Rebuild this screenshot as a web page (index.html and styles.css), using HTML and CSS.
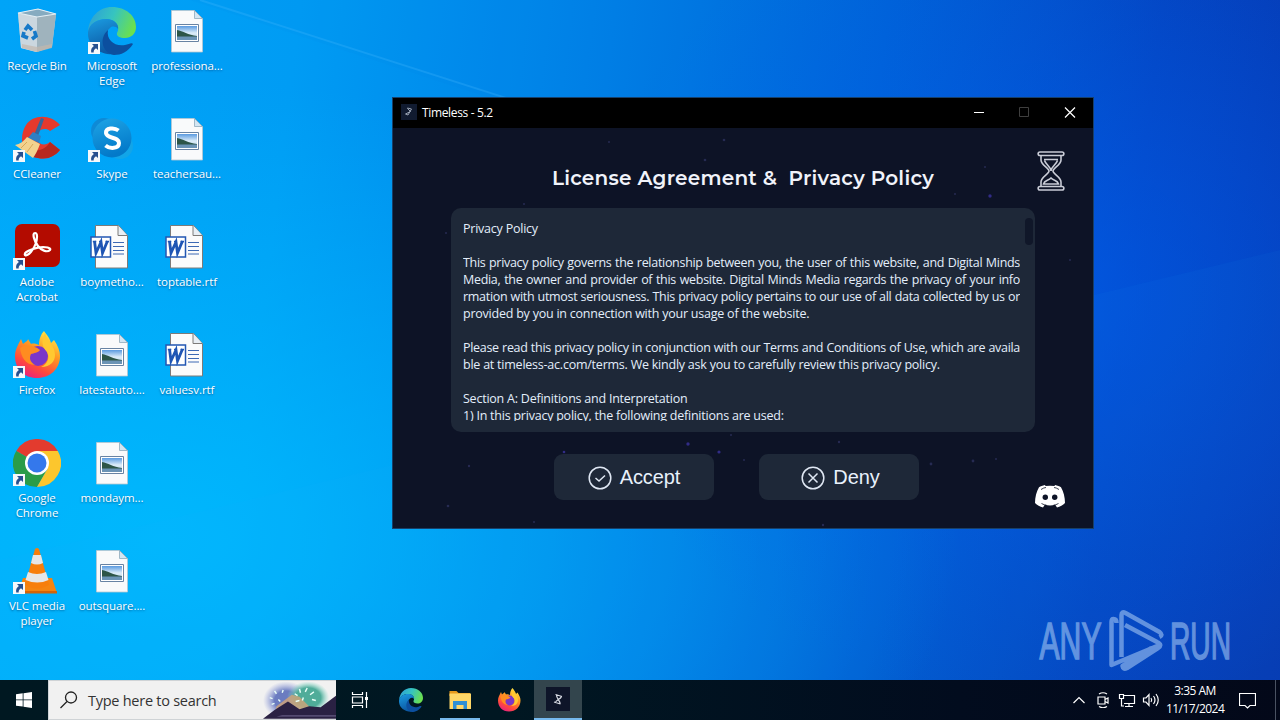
FILE: index.html
```html
<!DOCTYPE html>
<html lang="en">
<head>
    <meta charset="UTF-8">
    <meta name="viewport" content="width=device-width, initial-scale=1.0">
    <title>Timeless - 5.2</title>
    <link rel="stylesheet" href="styles.css">
</head>
<body>
    <!-- shared icons -->
    <svg class="defs" width="0" height="0">
        <defs>
            <linearGradient id="edgeBlue" x1="0" y1="0" x2="0.3" y2="1">
                <stop offset="0" stop-color="#1b9de2"/><stop offset="1" stop-color="#0c59a4"/>
            </linearGradient>
            <linearGradient id="edgeGreen" x1="0" y1="0.2" x2="1" y2="0.5">
                <stop offset="0" stop-color="#2c9fd8"/><stop offset="0.5" stop-color="#36c4c0"/><stop offset="1" stop-color="#6be04e"/>
            </linearGradient>
            <linearGradient id="skypeBlue" x1="0" y1="0" x2="0.3" y2="1">
                <stop offset="0" stop-color="#1ea5e6"/><stop offset="1" stop-color="#0379c9"/>
            </linearGradient>
            <linearGradient id="foxBody" x1="0.8" y1="0" x2="0.3" y2="1">
                <stop offset="0" stop-color="#fff14a"/><stop offset="0.4" stop-color="#ff9a22"/><stop offset="0.75" stop-color="#ff4a3c"/><stop offset="1" stop-color="#e9217f"/>
            </linearGradient>
            <linearGradient id="photoSky" x1="0" y1="0" x2="0" y2="1">
                <stop offset="0" stop-color="#5a9ae0"/><stop offset="0.5" stop-color="#dcecf8"/><stop offset="1" stop-color="#b5d3ea"/>
            </linearGradient>
            <symbol id="arrow" viewBox="0 0 12 12">
                <rect width="12" height="12" fill="#f5f8fb"/>
                <path d="M4 2h6v6L8 6.200C6 7.500 5.500 9 5.700 10.500H3.200C2.700 7.500 3.800 5.500 5.900 4.100z" fill="#27508f"/>
            </symbol>
            <symbol id="picture" viewBox="0 0 48 48">
                <path d="M8.500 3.500h23l8 8v33.500h-31z" fill="#f9fafb" stroke="#b9c6cf" stroke-width="0.800"/>
                <path d="M31.500 3.500l8 8h-8z" fill="#d3e6f3" stroke="#8fa9ba" stroke-width="0.800"/>
                <path d="M12.500 17.500h23v17h-23z" fill="#fff" stroke="#6883a3"/>
                <path d="M14 19h20v14h-20z" fill="url(#photoSky)"/>
                <path d="M14 23c6 1 11 5 20 6v1H14z" fill="#2d5547"/>
                <path d="M14 29.500h20V33H14z" fill="#6a93b5"/>
            </symbol>
            <symbol id="word" viewBox="0 0 48 48">
                <path d="M7.500 2.500h23l9 10v32.500h-32z" fill="#fbfbfb" stroke="#7d7a78"/>
                <path d="M30 2.500v10h9.500" fill="#e8eef4" stroke="#7d7a78"/>
                <path d="M25 19.500h11M25 23.500h11M25 27.500h11M25 31h11" stroke="#3d69b4"/>
                <path d="M3 14h19.500v20H3z" fill="#fff" stroke="#2357b3" stroke-width="1.500"/>
                <path d="M4.800 18.500h3.500M11 18.500h3M17.500 18.500h3.500" stroke="#1f55b4" stroke-width="1.500"/>
                <path d="M6.500 18l1.500 12 5-11 1.500 11 5-12" fill="none" stroke="#1f55b4" stroke-width="2.800"/>
            </symbol>
            <symbol id="edge" viewBox="0 0 48 48">
                <path d="M0 25C1 10 11 0 24 0c14 0 24 9 24 20 0 7-5 11-11 11-5 0-9-2-8-5 4-7-2-14-11-14C9 12 2 17 0 25z" fill="url(#edgeGreen)"/>
                <path d="M0 25c1-8 9-13 18-13 8 0 13 5 12 10-2-3-6-3-8-1-7 5-7 20 6 26C12 49-1 39 0 25z" fill="url(#edgeBlue)"/>
                <path d="M20 23c-2 10 7 17 17 15 4-1 7-3 8-1-5 8-12 11-19 11C15 46 10 32 20 23z" fill="#0c4f9f"/>
            </symbol>
            <symbol id="firefox" viewBox="0 0 48 48">
                <path d="M31 0c2 3 6 7 7 12l3-3c4 6 6 11 6 16 0 13-10 22-23 22S2 38 2 25C2 19 5 14 8 8l2 5c2-2 5-3 5-5l3 5c2-1 6 0 8 1 0-6 2-11 5-14z" fill="url(#foxBody)"/>
                <circle cx="25" cy="25" r="10" fill="#7a36c9"/>
                <path d="M7 17c5-4 14-3 20 2-2 3-6 3-9 4-2 4-1 8 4 11C12 34 8 25 7 17z" fill="#ff8c20"/>
                <path d="M32 2c-4 8-3 14 2 19 3 5 1 12-6 15 10 0 14-6 14-12 0-10-8-13-10-22z" fill="#ffc931"/>
            </symbol>
            <symbol id="glass" viewBox="0 0 28 40">
                <path d="M3 1h22c2.500 0 2.500 3.500 0 3.500H3C.5 4.500.5 1 3 1zM3 35.500h22c2.500 0 2.500 3.500 0 3.500H3C.5 39 .5 35.500 3 35.500z"/>
                <path d="M4 5v4c0 5 8 8 8 11s-8 6-8 11v4M24 5v4c0 5-8 8-8 11s8 6 8 11v4M7 8.500h14M7.500 9.500C9 14 14 16 14 20c0-4 5-6 6.500-10.500M6.500 33c1-4 5-3 7.500-6 2.500 3 6.500 2 7.500 6z"/>
            </symbol>
        </defs>
    </svg>

    <div class="screen">
        <svg class="beams" viewBox="0 0 1280 680" preserveAspectRatio="none">
            <path d="M190 0L680 160V0z" fill="#0070e0" opacity="0.060"/>
            <path d="M200 0L700 160" stroke="#4cbcff" stroke-width="2" opacity="0.250"/>
            <path d="M0 560L1280 250V680H0z" fill="#20a8ff" opacity="0.050"/>
        </svg>

        <div class="desktop">
            <div class="shortcut">
                <svg class="shortcut__icon" viewBox="0 0 48 48">
                    <path d="M5 6l20-4 18 5-4 33-16 5-15-4z" fill="#b8cfdb"/>
                    <path d="M5 6l19 4v35L8 41z" fill="#ced8df" opacity="0.850"/>
                    <path d="M24 10l19-3-4 33-15 5z" fill="#9fb3bd"/>
                    <path d="M5 6l20-4 18 5-19 3z" fill="#86abc0" stroke="#e4eff5" stroke-width="1.200"/>
                    <path d="M9 37l15 3 15-3v4l-15 4-15-4z" fill="#c3b8ac" opacity="0.700"/>
                    <path d="M12 23l3-4 4 4M21.500 24l1.500 5-4 3M15 31l-5-2 1-4" fill="none" stroke="#1679c8" stroke-width="3.600"/>
                </svg>
                <span>Recycle Bin</span>
            </div>
            <div class="shortcut">
                <svg class="shortcut__icon" viewBox="0 0 48 48">
                    <path d="M47 10C38-1 20-1 13 10 5 23 9 41 25 43c10 2 17-2 22-8l-10-8c-4 4-11 3-13-2-2-9 7-14 13-9z" fill="#e5392d"/>
                    <path d="M47 35c-5 6-12 10-22 8-7-1-11-5-13-10 13 6 22 0 25-6z" fill="#b7281f"/>
                    <path d="M28 3l3 1-6 17-4-1z" fill="#35669c"/>
                    <path d="M20 17l8 4-2 7-11-5z" fill="#2f7fc4"/>
                    <path d="M14 22l13 7c-2 6-5 11-7 14L2 30c5-1 9-4 12-8z" fill="#f3d28e"/>
                    <path d="M14 27L8 33M20 29l-6 8" stroke="#d9a859"/>
                    <use href="#arrow" y="35" width="12" height="12"/>
                </svg>
                <span>CCleaner</span>
            </div>
            <div class="shortcut">
                <svg class="shortcut__icon" viewBox="0 0 48 48">
                    <rect x="2" y="1" width="45" height="43" rx="7" fill="#b30b00"/>
                    <path d="M12 32c3 2 9-6 11-12 1-4 2-10-1-10s-1 8 3 13c3 4 9 7 12 4 2-3-9-4-17-1-6 2-9 4-8 6z" fill="none" stroke="#fff" stroke-width="2.200"/>
                    <use href="#arrow" y="35" width="12" height="12"/>
                </svg>
                <span>Adobe<br>Acrobat</span>
            </div>
            <div class="shortcut">
                <svg class="shortcut__icon" viewBox="0 0 48 48">
                    <use href="#firefox" width="48" height="48"/>
                    <use href="#arrow" y="35" width="12" height="12"/>
                </svg>
                <span>Firefox</span>
            </div>
            <div class="shortcut">
                <svg class="shortcut__icon" viewBox="0 0 48 48">
                    <path d="M24 24L3.200 12A24 24 0 0 1 44.800 12z" fill="#e33b2e"/>
                    <path d="M24 24L3.200 12A24 24 0 0 0 24 48L34.400 30z" fill="#2a9c48"/>
                    <path d="M24 12h20.800A24 24 0 0 1 24 48l10.400-18z" fill="#fcc62d"/>
                    <circle cx="24" cy="24" r="12" fill="#fff"/>
                    <circle cx="24" cy="24" r="9.500" fill="#3478ec"/>
                    <use href="#arrow" y="35" width="12" height="12"/>
                </svg>
                <span>Google<br>Chrome</span>
            </div>
            <div class="shortcut">
                <svg class="shortcut__icon" viewBox="0 0 48 48">
                    <path d="M10 31h29l5 15H5z" fill="#f58410"/>
                    <path d="M5 44h39v2.500H5z" fill="#d56406"/>
                    <path d="M22 2q2-2 4 0l10 36q-12 7-24 0z" fill="#f77e0b"/>
                    <path d="M20 8h8l2 8q-6 3-12 0zM15 25q9 4 18 0l2.500 8q-11 5-23 0z" fill="#e6e6e6"/>
                    <use href="#arrow" y="35" width="12" height="12"/>
                </svg>
                <span>VLC media<br>player</span>
            </div>
            <div class="shortcut">
                <svg class="shortcut__icon" viewBox="0 0 48 48">
                    <use href="#edge" width="48" height="48"/>
                    <use href="#arrow" y="35" width="12" height="12"/>
                </svg>
                <span>Microsoft<br>Edge</span>
            </div>
            <div class="shortcut">
                <svg class="shortcut__icon" viewBox="0 0 48 48">
                    <circle cx="16" cy="16" r="13" fill="#0e8ad6"/>
                    <circle cx="32" cy="31" r="13" fill="#12a5e8"/>
                    <circle cx="24" cy="23" r="19.500" fill="url(#skypeBlue)"/>
                    <path d="M30.500 15.500C26 12 17.500 13 18 18c.5 6 13 3.500 13 10 0 6-9.500 6-13.500 2.500" fill="none" stroke="#fff" stroke-width="4"/>
                    <use href="#arrow" y="35" width="12" height="12"/>
                </svg>
                <span>Skype</span>
            </div>
            <div class="shortcut">
                <svg class="shortcut__icon"><use href="#word" width="48" height="48"/></svg>
                <span>boymetho...</span>
            </div>
            <div class="shortcut">
                <svg class="shortcut__icon"><use href="#picture" width="48" height="48"/></svg>
                <span>latestauto....</span>
            </div>
            <div class="shortcut">
                <svg class="shortcut__icon"><use href="#picture" width="48" height="48"/></svg>
                <span>mondaym...</span>
            </div>
            <div class="shortcut">
                <svg class="shortcut__icon"><use href="#picture" width="48" height="48"/></svg>
                <span>outsquare....</span>
            </div>
            <div class="shortcut">
                <svg class="shortcut__icon"><use href="#picture" width="48" height="48"/></svg>
                <span>professiona...</span>
            </div>
            <div class="shortcut">
                <svg class="shortcut__icon"><use href="#picture" width="48" height="48"/></svg>
                <span>teachersau...</span>
            </div>
            <div class="shortcut">
                <svg class="shortcut__icon"><use href="#word" width="48" height="48"/></svg>
                <span>toptable.rtf</span>
            </div>
            <div class="shortcut">
                <svg class="shortcut__icon"><use href="#word" width="48" height="48"/></svg>
                <span>valuesv.rtf</span>
            </div>
        </div>

        <svg class="watermark" viewBox="0 0 204 64">
            <text x="1.500" y="50" textLength="62" lengthAdjust="spacingAndGlyphs">ANY</text>
            <text x="132" y="50" textLength="61" lengthAdjust="spacingAndGlyphs">RUN</text>
            <path d="M78.500 14q0-4-3-4-2 0-2 3v43l48-20M83.500 48V6q0-4 4-2l34 19q4 3 0 5M87 16l32 17q6 3 1 6L89 59q-4 2-4.500-2l29-18"/>
        </svg>

        <div class="window">
            <div class="titlebar">
                <svg class="titlebar__icon" viewBox="0 0 16 16">
                    <rect width="16" height="16" fill="#111b30"/>
                    <path d="M6.500 4l4 1-3.500 6-2.500-1 5-2.500-3-3z" fill="none" stroke="#9aa4b4"/>
                </svg>
                <span class="titlebar__text">Timeless - 5.2</span>
                <svg class="titlebar__buttons" viewBox="0 0 138 30">
                    <path d="M19 14.500h10" stroke="#fff"/>
                    <path d="M64.500 9.500h9v9h-9z" fill="none" stroke="#3f3f3f"/>
                    <path d="M110 9.500l10 10M120 9.500l-10 10" stroke="#fff" stroke-width="1.200"/>
                </svg>
            </div>
            <div class="content">
                <svg class="stars" viewBox="0 0 700 400">
                    <g fill="#262b52">
                        <circle cx="216" cy="14" r="1"/><circle cx="331" cy="12" r="1.300"/><circle cx="312" cy="32" r="1.300"/>
                        <circle cx="131" cy="76" r="1"/><circle cx="53" cy="105" r="1"/><circle cx="592" cy="39" r="1"/>
                        <circle cx="562" cy="66" r="1"/><circle cx="677" cy="132" r="1"/><circle cx="76" cy="338" r="1.200"/>
                        <circle cx="55" cy="378" r="1.300"/><circle cx="141" cy="394" r="1"/><circle cx="430" cy="397" r="1.200"/>
                        <circle cx="446" cy="314" r="1.200"/><circle cx="538" cy="336" r="1.400"/><circle cx="580" cy="333" r="1.400"/>
                        <circle cx="603" cy="331" r="1"/><circle cx="351" cy="332" r="1"/><circle cx="338" cy="307" r="1"/>
                    </g>
                    <g fill="#312c86">
                        <circle cx="597" cy="68" r="1.700"/><circle cx="295" cy="316" r="1.700"/><circle cx="326" cy="324" r="1.600"/><circle cx="171" cy="324" r="1.300"/>
                    </g>
                </svg>
                <h1 class="heading">License Agreement &amp;&nbsp; Privacy Policy</h1>
                <svg class="hourglass"><use href="#glass" width="28" height="40"/></svg>

                <div class="policy">
                    <div class="policy__text">
                        <p>Privacy Policy</p>
                        <p class="blank"></p>
                        <p class="full">This privacy policy governs the relationship between you, the user of this website, and Digital Minds</p>
                        <p class="full">Media, the owner and provider of this website. Digital Minds Media regards the privacy of your info</p>
                        <p class="full">rmation with utmost seriousness. This privacy policy pertains to our use of all data collected by us or</p>
                        <p>provided by you in connection with your usage of the website.</p>
                        <p class="blank"></p>
                        <p class="full">Please read this privacy policy in conjunction with our Terms and Conditions of Use, which are availa</p>
                        <p>ble at timeless-ac.com/terms. We kindly ask you to carefully review this privacy policy.</p>
                        <p class="blank"></p>
                        <p>Section A: Definitions and Interpretation</p>
                        <p>1) In this privacy policy, the following definitions are used:</p>
                    </div>
                    <div class="policy__thumb"></div>
                </div>

                <div class="actions">
                    <button class="btn">
                        <svg viewBox="0 0 24 24"><circle cx="12" cy="12" r="10.800"/><path d="M7.500 12l3.500 3 6-5.500"/></svg>
                        Accept
                    </button>
                    <button class="btn btn--deny">
                        <svg viewBox="0 0 24 24"><circle cx="12" cy="12" r="10.800"/><path d="M7.500 7.500l9 9M16.500 7.500l-9 9"/></svg>
                        Deny
                    </button>
                </div>
                <svg class="discord" viewBox="0 0 30 23">
                    <path d="M10.500 1L10 0C7.500.5 5.500 1.200 4 2.200 1.500 6.500 0 12 0 18c2 2.200 5 3.700 8 4.500l1.800-2.800c3.400 1 7 1 10.400 0l1.800 2.800c3-.8 6-2.300 8-4.500 0-6-1.500-11.500-4-15.800C24.500 1.200 22.500.5 20 0l-.5 1q-4.500-.7-9 0z" fill="#fff"/>
                    <path d="M6 4.500q3-2 5-2M24 4.500q-3-2-5-2M6.500 18.500q3 1.700 5 1.700M23.500 18.500q-3 1.700-5 1.700" fill="none" stroke="#0d1326" stroke-width="0.800"/>
                    <circle cx="10.300" cy="12.300" r="2.700" fill="#0d1326"/><circle cx="19.700" cy="12.300" r="2.700" fill="#0d1326"/>
                </svg>
            </div>
        </div>

        <div class="taskbar">
            <div class="start">
                <svg width="16" height="16" viewBox="0 0 16 16" fill="#fff">
                    <path d="M0 2.200l6.700-.9v6.200H0zM7.500 1.200L16 0v7.500H7.500zM0 8.300h6.700v6.300L0 13.700zM7.500 8.300H16V16l-8.500-1.200z"/>
                </svg>
            </div>
            <div class="search">
                <svg class="search__glass" viewBox="0 0 18 18"><circle cx="11" cy="6.500" r="5.500"/><path d="M7 10.500l-6.500 6.500"/></svg>
                <span>Type here to search</span>
                <svg class="search__art" viewBox="0 0 76 39">
                    <defs>
                        <radialGradient id="glowA"><stop offset="0.500" stop-color="#6b7cc0"/><stop offset="1" stop-color="#9ba6df" stop-opacity="0"/></radialGradient>
                        <radialGradient id="glowB"><stop offset="0.600" stop-color="#4fac99"/><stop offset="1" stop-color="#8ddccb" stop-opacity="0"/></radialGradient>
                    </defs>
                    <ellipse cx="24" cy="20" rx="24" ry="20" fill="url(#glowA)"/>
                    <ellipse cx="47" cy="17" rx="22" ry="17" fill="url(#glowB)"/>
                    <path d="M14 26l16-12 8 2 12 12-10 7H12z" fill="#d2a477" opacity="0.800"/>
                    <path d="M0 39l12-9 14-9 12 8 10-3 12 1 16-12v24z" fill="#2a2143"/>
                    <path d="M20 35h56v2H14z" fill="#7d769f" opacity="0.500"/>
                    <path d="M10 18l-3-1M14 13l-2-3M20 12l1-3M12 23l-3 1M36 15l-3-2M39 12l-1-4M44 11l2-4M49 14l4-3M38 20l-4 1M51 19l4 1M16 19l2 2M42 17l-1 3" stroke="#e8fff8" stroke-width="1.500"/>
                </svg>
            </div>
            <div class="task">
                <svg width="18" height="16" viewBox="0 0 18 16" fill="none" stroke="#fff" stroke-width="1.200">
                    <path d="M1.500 0v2.500h10V0M1.500 5h10v6h-10zM1.500 16v-2.500h10V16M15.500 0v16"/><path d="M14 5h3v3h-3z" fill="#fff" stroke="none"/>
                </svg>
            </div>
            <div class="apps">
                <div class="task"><svg width="24" height="24"><use href="#edge" width="24" height="24"/></svg></div>
                <div class="task task--open">
                    <svg width="24" height="24" viewBox="0 0 24 24">
                        <path d="M1.500 3h7l2 2H22v3H1.500z" fill="#e79a1b"/><path d="M1.500 5.500H23V21H1.500z" fill="#ffd767"/>
                        <path d="M5 21v-8h14v8h-3.500v-4h-7v4z" fill="#2e8fd3"/>
                    </svg>
                </div>
                <div class="task"><svg width="24" height="24"><use href="#firefox" width="24" height="24"/></svg></div>
                <div class="task task--active">
                    <svg width="24" height="24" viewBox="0 0 24 24">
                        <rect width="24" height="24" fill="#0e1529"/>
                        <path d="M9.500 7.500l6.500 2M8 15l6.500 2M10.500 8c0 4 3.500 5 3.500 8.500M15.500 9.500c-1 3-5.500 3-6 6" fill="none" stroke="#d9dce5" stroke-width="1.200"/>
                    </svg>
                </div>
            </div>
            <div class="tray">
                <svg width="24" height="16" viewBox="0 0 12 16"><path d="M.5 11L6 5.500 11.500 11"/></svg>
                <svg width="24" height="16" viewBox="0 0 12 16"><path d="M1 5h7v7H1zM8 7.500L11 6v5L8 9.500M2 2q4-2.500 8 0M2 14.500q4 2.500 8 0"/></svg>
                <svg width="24" height="16" viewBox="0 0 16 16"><path d="M5 3.500h10.500v8H5M10 11.500V14M6 14.500h8M.5 2.500h4v4h-4zM2.500 6.500v7.500H5"/></svg>
                <svg width="24" height="16" viewBox="0 0 18 16"><path d="M1.500 6H4l3-3.500v11L4 10H1.500zM9 6q1.500 2 0 4M11.500 4q3 4 0 8M14 2q4.500 6 0 12"/></svg>
                <div class="clock">3:35 AM<br>11/17/2024</div>
                <svg width="17" height="17" viewBox="0 0 17 17"><path d="M.5 1.500h16v12h-5.500l-2.500 2.500L6 13.500H.5z"/></svg>
            </div>
        </div>
    </div>
</body>
</html>
```
FILE: styles.css
```css
* {
    box-sizing: border-box;
}

body {
    margin: 0;
    font-family: "Segoe UI", "Open Sans", "Noto Sans", sans-serif;
    font-size: 12px;
}

.defs {
    position: absolute;
}

.screen {
    position: relative;
    display: flex;
    flex-direction: column;
    width: 1280px;
    height: 720px;
    overflow: hidden;
    background:
        radial-gradient(ellipse 480px 420px at 1060px 290px, rgba(0, 98, 245, 0.55), rgba(0, 98, 245, 0)),
        radial-gradient(ellipse 800px 460px at 160px 540px, rgba(0, 190, 255, 0.8), rgba(0, 190, 255, 0)),
        linear-gradient(97deg, #00a4f8 0%, #009cf4 22%, #007fe6 45%, #0062d6 65%, #0443be 85%, #0637b0 100%);
}

.beams {
    position: absolute;
    width: 1280px;
    height: 680px;
}

/* desktop shortcuts */
.desktop {
    position: relative;
    flex: 1;
    display: grid;
    grid-auto-flow: column;
    grid-template-rows: repeat(6, 108px);
    grid-auto-columns: 75px;
    padding-top: 7px;
}

.shortcut {
    display: flex;
    flex-direction: column;
    align-items: center;
    color: #fff;
    font-size: 11.5px;
    line-height: 15px;
    letter-spacing: -0.05px;
    text-align: center;
    white-space: nowrap;
    text-shadow: 0 1px 2px rgba(0, 40, 90, 0.55);
}

.shortcut__icon {
    width: 48px;
    height: 48px;
    margin: 0 1px 3px 0;
}

.shortcut span {
    margin-right: 1px;
}

.watermark {
    position: absolute;
    left: 1038px;
    top: 609px;
    width: 204px;
    height: 64px;
    opacity: 0.58;
}

.watermark text {
    font-family: "Liberation Sans", sans-serif;
    font-size: 51px;
    fill: #a5c8f4;
    stroke: #a5c8f4;
    stroke-width: 1.6;
}

.watermark path {
    fill: none;
    stroke: #a5c8f4;
    stroke-width: 4.5;
    stroke-linejoin: round;
}

/* app window */
.window {
    position: absolute;
    left: 392px;
    top: 97px;
    width: 702px;
    height: 432px;
    border: 1px solid #17406a;
    background: #0d1326;
}

.titlebar {
    display: flex;
    align-items: center;
    height: 30px;
    padding-left: 8px;
    background: #000;
    color: #fff;
}

.titlebar__icon {
    width: 16px;
    height: 16px;
    margin-bottom: 2px;
}

.titlebar__text {
    flex: 1;
    margin: 0 0 2px 5px;
    font-size: 12px;
    letter-spacing: -0.35px;
}

.titlebar__buttons {
    width: 138px;
    height: 30px;
}

.content {
    position: relative;
    display: grid;
    grid-template-columns: 58px 584px 58px;
    grid-template-rows: 80px 224px 96px;
}

.stars {
    position: absolute;
    width: 700px;
    height: 400px;
}

.heading {
    grid-column: 2;
    margin: 0;
    padding-top: 37px;
    font-family: "Montserrat", "Inter", sans-serif;
    font-size: 20px;
    font-weight: 600;
    line-height: 26px;
    letter-spacing: 0.23px;
    text-align: center;
    color: #f1f3fa;
}

.hourglass {
    width: 28px;
    height: 40px;
    margin: 23px 0 0 2px;
    fill: none;
    stroke: #c9ccd6;
    stroke-width: 1.6;
}

.policy {
    position: relative;
    grid-column: 2;
    display: flex;
    justify-content: space-between;
    padding: 10px 2px 11px 12px;
    border-radius: 10px;
    background: #1e2838;
}

.policy__text {
    width: 557px;
    overflow: hidden;
    padding-top: 2px;
    color: #e3eefb;
    font-size: 12.5px;
    line-height: 17px;
    letter-spacing: -0.23px;
    white-space: nowrap;
}

.policy__text p {
    height: 17px;
    margin: 0;
}

.policy__text .full {
    letter-spacing: -0.3px;
    white-space: normal;
    text-align-last: justify;
}

.policy__thumb {
    width: 8px;
    height: 27px;
    border-radius: 4px;
    background: #101729;
}

.actions {
    position: relative;
    grid-column: 2;
    display: flex;
    justify-content: center;
    gap: 45px;
    padding: 22px 13px 0 0;
}

.btn {
    display: flex;
    align-items: center;
    justify-content: center;
    gap: 8px;
    width: 160px;
    height: 46px;
    padding: 1px 0 0;
    border: none;
    border-radius: 9px;
    background: #1e2838;
    color: #e8f1fc;
    font-family: "Liberation Sans", Arial, sans-serif;
    font-size: 20px;
    letter-spacing: -0.1px;
}

.btn--deny {
    padding-left: 3px;
}

.btn svg {
    width: 24px;
    height: 24px;
    fill: none;
    stroke: #dfe7f3;
    stroke-width: 1.5;
}

.discord {
    width: 30px;
    height: 23px;
    margin-top: 53px;
}

/* taskbar */
.taskbar {
    position: relative;
    display: flex;
    height: 40px;
    background: linear-gradient(90deg, #001821, #001722 40%, #020c1e 75%, #030819);
}

.start,
.task {
    display: flex;
    align-items: center;
    justify-content: center;
    width: 48px;
    height: 40px;
}

.search {
    display: flex;
    align-items: center;
    width: 288px;
    border: 1px solid #cfd3d6;
    border-right: none;
    background: #f1f1f1;
    color: #333;
    font-size: 14.5px;
}

.search__glass {
    width: 18px;
    height: 18px;
    margin: 0 10px 0 11px;
    fill: none;
    stroke: #222;
    stroke-width: 1.3;
}

.search span {
    flex: 1;
    white-space: nowrap;
    letter-spacing: -0.26px;
}

.search__art {
    width: 73px;
    height: 38px;
}

.apps {
    display: flex;
    gap: 1px;
    margin-left: 3px;
}

.task--open {
    background: linear-gradient(#76b9ed, #76b9ed) center bottom / 40px 2px no-repeat;
}

.task--active {
    background: #33454d;
    border-bottom: 2px solid #76b9ed;
}

.tray {
    display: flex;
    align-items: center;
    margin-left: auto;
    margin-right: 4px;
    padding-right: 19px;
    border-right: 1px solid #4a5262;
    color: #fff;
}

.tray svg {
    fill: none;
    stroke: #fff;
    stroke-width: 1.2;
}

.clock {
    width: 58px;
    margin: 0 15px 0 3px;
    font-size: 12px;
    line-height: 18px;
    letter-spacing: -0.55px;
    text-align: center;
    white-space: nowrap;
}
```
